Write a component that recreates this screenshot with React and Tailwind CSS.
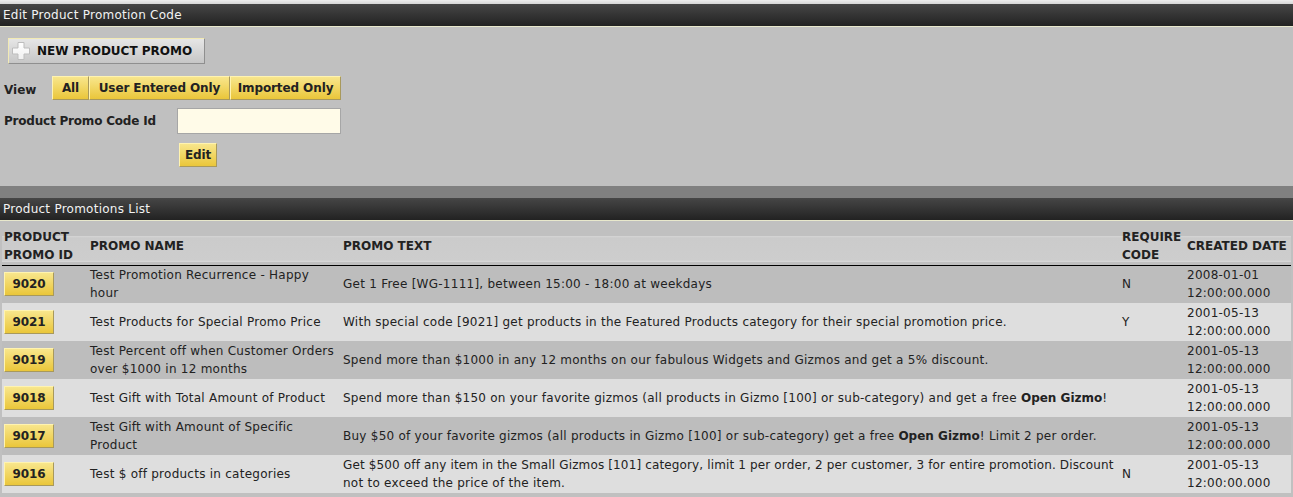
import React from "react";

const FONT = "font-['DejaVu_Sans','Verdana',sans-serif]";

const YELLOW_BTN =
  "border border-t-[#fff3b0] border-l-[#fff3b0] border-b-[#a8995c] border-r-[#a8995c] bg-[linear-gradient(#f8e68c,#eac63a)] font-bold tracking-[-0.1px] text-[#222] text-[12px] leading-none";

const promos = [
  {
    id: "9020",
    name: "Test Promotion Recurrence - Happy hour",
    text: <>Get 1 Free [WG-1111], between 15:00 - 18:00 at weekdays</>,
    req: "N",
    date: "2008-01-01",
  },
  {
    id: "9021",
    name: "Test Products for Special Promo Price",
    text: <>With special code [9021] get products in the Featured Products category for their special promotion price.</>,
    req: "Y",
    date: "2001-05-13",
  },
  {
    id: "9019",
    name: "Test Percent off when Customer Orders over $1000 in 12 months",
    text: <>Spend more than $1000 in any 12 months on our fabulous Widgets and Gizmos and get a 5% discount.</>,
    req: "",
    date: "2001-05-13",
  },
  {
    id: "9018",
    name: "Test Gift with Total Amount of Product",
    text: (
      <>
        Spend more than $150 on your favorite gizmos (all products in Gizmo [100] or sub-category) and get a free{" "}
        <b className="tracking-normal">Open Gizmo</b>!
      </>
    ),
    req: "",
    date: "2001-05-13",
  },
  {
    id: "9017",
    name: "Test Gift with Amount of Specific Product",
    text: (
      <>
        Buy $50 of your favorite gizmos (all products in Gizmo [100] or sub-category) get a free{" "}
        <b className="tracking-normal">Open Gizmo</b>! Limit 2 per order.
      </>
    ),
    req: "",
    date: "2001-05-13",
  },
  {
    id: "9016",
    name: "Test $ off products in categories",
    text: (
      <>
        <span className="whitespace-nowrap tracking-[0.14px]">
          Get $500 off any item in the Small Gizmos [101] category, limit 1 per order, 2 per customer, 3 for entire
          promotion. Discount
        </span>{" "}
        not to exceed the price of the item.
      </>
    ),
    req: "N",
    date: "2001-05-13",
  },
];

function Bar({ children }) {
  return (
    <div className="h-[23px] border-b border-[#e8e8cc] bg-[linear-gradient(#464646,#222222)] px-[3px] text-[12px] leading-[23px] text-[#f2f2f2]">
      {children}
    </div>
  );
}

function PlusIcon() {
  return (
    <svg width="20" height="20" viewBox="0 0 20 20">
      <defs>
        <linearGradient id="plusFill" x1="0" y1="0" x2="0" y2="1">
          <stop offset="0" stopColor="#ffffff" />
          <stop offset="1" stopColor="#f0f0f0" />
        </linearGradient>
      </defs>
      <path
        d="M7 1.5h6v5.5h5.5v6h-5.5v5.5h-6v-5.5h-5.5v-6h5.5z"
        fill="url(#plusFill)"
        stroke="#bdbdbd"
        strokeWidth="1"
        strokeLinejoin="round"
      />
    </svg>
  );
}

export default function App() {
  return (
    <div className={`${FONT} min-h-screen w-full bg-[#c0c0c0] text-[12px] tracking-[0.25px] text-[#222]`}>
      <div className="h-[4px] bg-[linear-gradient(#eeeeee,#d6d6d6)]" />
      <Bar>Edit Product Promotion Code</Bar>

      {/* search / edit form */}
      <div className="h-[159px] pt-[11px]">
        <button className="ml-[8px] flex h-[26px] w-[197px] items-center gap-[6px] border border-t-[#f2eab4] border-l-[#f2eab4] border-b-[#8f8f8f] border-r-[#8f8f8f] bg-[linear-gradient(#e6e6e6,#c6c6c6)] pl-[2px] text-[12px] font-bold tracking-normal text-[#111]">
          <PlusIcon />
          NEW PRODUCT PROMO
        </button>

        <div className="mt-[12px] flex items-center">
          <span className="w-[52px] pl-[4px] pt-[4px] font-bold tracking-normal">View</span>
          <button className={`${YELLOW_BTN} h-[24px] w-[37px]`}>All</button>
          <button className={`${YELLOW_BTN} h-[24px] w-[141px]`}>User Entered Only</button>
          <button className={`${YELLOW_BTN} h-[24px] w-[111px]`}>Imported Only</button>
        </div>

        <div className="mt-[8px] flex items-center">
          <span className="w-[177px] pl-[4px] font-bold tracking-[-0.2px]">Product Promo Code Id</span>
          <input className="h-[26px] w-[164px] border border-[#a6a6a6] bg-[#fffbe8] px-[3px] outline-none" />
        </div>

        <button className={`${YELLOW_BTN} ml-[179px] mt-[9px] h-[24px] w-[38px]`}>Edit</button>
      </div>

      <div className="h-[12px] bg-[#808080]" />
      <Bar>Product Promotions List</Bar>

      {/* promotions table */}
      <div className="px-[2px] pt-[6px] pb-[4px]">
        <table className="w-[1289px] table-fixed border-collapse text-left leading-[18px]">
          <colgroup>
            <col className="w-[86px]" />
            <col className="w-[253px]" />
            <col className="w-[779px]" />
            <col className="w-[65px]" />
            <col className="w-[106px]" />
          </colgroup>
          <thead>
            <tr className="h-[38px] border-b border-black bg-[linear-gradient(#c0c0c0_9px,#d6d6d6_9px,#cbcbcb_11px,#cdcdcd_33px,#d9d9d9_35px,#c0c0c0_35px)] font-bold tracking-normal">
              <th className="px-[2px] align-middle">PRODUCT PROMO ID</th>
              <th className="px-[2px] align-middle">PROMO NAME</th>
              <th className="px-[2px] align-middle">PROMO TEXT</th>
              <th className="px-[2px] align-middle">REQUIRE CODE</th>
              <th className="px-[2px] align-middle">CREATED DATE</th>
            </tr>
          </thead>
          <tbody>
            {promos.map((p, i) => (
              <tr key={p.id} className={`h-[38px] ${i % 2 ? "bg-[#dedede]" : "bg-[#bdbdbd]"}`}>
                <td className="px-[2px] align-middle">
                  <button className={`${YELLOW_BTN} h-[24px] w-[50px]`}>{p.id}</button>
                </td>
                <td className="px-[2px] align-middle">{p.name}</td>
                <td className="pl-[2px] pr-0 align-middle">{p.text}</td>
                <td className="px-[2px] align-middle">{p.req}</td>
                <td className="px-[2px] align-middle">
                  {p.date}
                  <br />
                  12:00:00.000
                </td>
              </tr>
            ))}
          </tbody>
        </table>
      </div>
    </div>
  );
}
